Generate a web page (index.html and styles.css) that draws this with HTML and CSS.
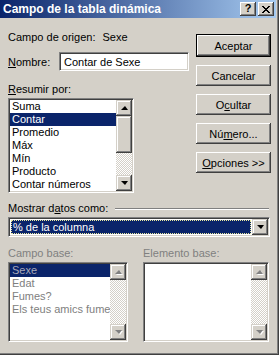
FILE: index.html
```html
<!DOCTYPE html>
<html lang="es">
<head>
  <meta charset="UTF-8">
  <title>Campo de la tabla dinámica</title>
  <link rel="stylesheet" href="styles.css">
</head>
<body>
  <div class="window">
    <!-- Barra de título -->
    <div class="titlebar">
      <span class="title">Campo de la tabla dinámica</span>
      <div class="title-btns">
        <span class="tbtn help">?</span>
        <span class="tbtn close">
          <svg width="8" height="7" viewBox="0 0 8 7" shape-rendering="crispEdges">
            <path d="M0 0h2v1H0zM6 0h2v1H6zM1 1h2v1H1zM5 1h2v1H5zM2 2h4v1H2zM3 3h2v1H3zM2 4h4v1H2zM1 5h2v1H1zM5 5h2v1H5zM0 6h2v1H0zM6 6h2v1H6z" fill="#000"/>
          </svg>
        </span>
      </div>
    </div>

    <div class="content">
      <div class="top">
        <div class="left">
          <div class="origin">
            <span>Campo de origen:</span>
            <span class="origin-val">Sexe</span>
          </div>
          <div class="name-row">
            <span class="name-lbl"><u>N</u>ombre:</span>
            <div class="field">Contar de Sexe</div>
          </div>
          <div class="lbl"><u>R</u>esumir por:</div>
          <div class="listbox summary">
            <ul class="items">
              <li>Suma</li>
              <li class="sel">Contar</li>
              <li>Promedio</li>
              <li>Máx</li>
              <li>Mín</li>
              <li>Producto</li>
              <li>Contar números</li>
            </ul>
            <div class="scrollbar">
              <span class="sbtn"><i class="arr up"></i></span>
              <span class="thumb"></span>
              <span class="track"></span>
              <span class="sbtn"><i class="arr down"></i></span>
            </div>
          </div>
        </div>

        <div class="buttons">
          <button class="btn default">Aceptar</button>
          <button class="btn">Cancelar</button>
          <button class="btn">O<u>c</u>ultar</button>
          <button class="btn">Nú<u>m</u>ero...</button>
          <button class="btn"><u>O</u>pciones &gt;&gt;</button>
        </div>
      </div>

      <div class="sep-row">
        <span>Mostrar d<u>a</u>tos como:</span>
        <span class="sep-line"></span>
      </div>
      <div class="combo">
        <div class="combo-val"><span class="focus">% de la columna</span></div>
        <span class="sbtn"><i class="arr down"></i></span>
      </div>

      <div class="base">
        <div class="base-col">
          <div class="lbl disabled">Campo base:</div>
          <div class="listbox base-list w1">
            <ul class="items disabled">
              <li class="sel">Sexe</li>
              <li>Edat</li>
              <li>Fumes?</li>
              <li>Els teus amics fumen</li>
            </ul>
            <div class="scrollbar off">
              <span class="sbtn"><i class="arr up"></i></span>
              <span class="track"></span>
              <span class="sbtn"><i class="arr down"></i></span>
            </div>
          </div>
        </div>
        <div class="base-col">
          <div class="lbl disabled">Elemento base:</div>
          <div class="listbox base-list w2">
            <ul class="items disabled"></ul>
            <div class="scrollbar off">
              <span class="sbtn"><i class="arr up"></i></span>
              <span class="track"></span>
              <span class="sbtn"><i class="arr down"></i></span>
            </div>
          </div>
        </div>
      </div>
    </div>
  </div>
</body>
</html>
```

FILE: styles.css
```css
* { box-sizing: border-box; }
body {
  margin: 0;
  font-family: 'Liberation Sans', Arial, sans-serif;
  font-size: 11px;
  color: #000;
  background: #d4d0c8;
}
.window {
  width: 279px;
  height: 355px;
  background: #d4d0c8;
  box-shadow: inset -1px -1px #404040, inset -2px -2px #808080;
  display: flex;
  flex-direction: column;
}
/* Barra de título */
.titlebar {
  height: 18px;
  margin-right: 3px;
  background: linear-gradient(90deg, #0a246a, #a6caf0);
  display: flex;
  align-items: center;
  justify-content: space-between;
  padding: 0 2px 0 3px;
}
.title {
  color: #fff;
  font-weight: 700;
  font-size: 12px;
}
.title-btns {
  display: flex;
  gap: 2px;
}
.tbtn {
  width: 16px;
  height: 14px;
  background: #d4d0c8;
  box-shadow: inset -1px -1px #404040, inset 1px 1px #fff, inset -2px -2px #808080;
  display: flex;
  align-items: center;
  justify-content: center;
  font-weight: 700;
  font-size: 11px;
  line-height: 1;
}
.help { padding-bottom: 1px; }
/* Contenido */
.content {
  padding: 0 0 0 8px;
}
.top {
  display: flex;
  gap: 7px;
}
.left {
  width: 181px;
}
.origin {
  margin-top: 13px;
  line-height: 13px;
  display: flex;
  gap: 7px;
}
.name-row {
  margin-top: 8px;
  display: flex;
  align-items: center;
  gap: 12px;
}
.name-lbl { width: 39px; }
.field {
  width: 130px;
  height: 19px;
  background: #fff;
  border: 1px solid;
  border-color: #808080 #fff #fff #808080;
  box-shadow: inset 1px 1px #404040, inset -1px -1px #d4d0c8;
  padding: 2px 0 0 4px;
  line-height: 14px;
}
.lbl {
  line-height: 13px;
  margin-top: 12px;
}
.lbl.disabled {
  color: #808080;
  margin-top: 0;
}
/* Listas */
.listbox {
  display: flex;
  background: #fff;
  border: 1px solid;
  border-color: #808080 #fff #fff #808080;
  box-shadow: inset 1px 1px #404040, inset -1px -1px #d4d0c8;
  padding: 1px;
  margin-top: 2px;
}
.summary {
  width: 126px;
  height: 95px;
}
.items {
  list-style: none;
  margin: 0;
  padding: 0;
  flex: 1;
  min-width: 0;
  overflow: hidden;
}
.items li {
  height: 13px;
  line-height: 13px;
  padding-left: 2px;
  white-space: nowrap;
}
.items li.sel {
  background: #0a246a;
  color: #fff;
}
.items.disabled li { color: #808080; }
.items.disabled li.sel { color: #a8a8b8; }
.scrollbar {
  width: 16px;
  flex: none;
  display: flex;
  flex-direction: column;
}
.sbtn {
  width: 16px;
  height: 16px;
  flex: none;
  background: #d4d0c8;
  box-shadow: inset -1px -1px #404040, inset 1px 1px #d4d0c8, inset -2px -2px #808080, inset 2px 2px #fff;
  display: flex;
  align-items: center;
  justify-content: center;
}
.thumb {
  height: 37px;
  flex: none;
  background: #d4d0c8;
  box-shadow: inset -1px -1px #404040, inset 1px 1px #d4d0c8, inset -2px -2px #808080, inset 2px 2px #fff;
}
.track {
  flex: 1;
  background: repeating-conic-gradient(#fff 0 25%, #d4d0c8 0 50%) 0 0 / 2px 2px;
}
.arr {
  width: 0;
  height: 0;
  border-left: 4px solid transparent;
  border-right: 3px solid transparent;
}
.arr.up { border-bottom: 4px solid #000; margin-top: -1px; }
.arr.down { border-top: 4px solid #000; }
.off .arr.up { border-bottom-color: #808080; filter: drop-shadow(1px 1px 0 #fff); }
.off .arr.down { border-top-color: #808080; filter: drop-shadow(1px 1px 0 #fff); }
/* Botones */
.buttons {
  margin-top: 16px;
  display: flex;
  flex-direction: column;
  gap: 8px;
}
.btn {
  width: 75px;
  height: 21px;
  font-family: inherit;
  font-size: 11px;
  color: #000;
  background: #d4d0c8;
  border: none;
  padding: 0;
  box-shadow: inset -1px -1px #404040, inset 1px 1px #fff, inset -2px -2px #808080;
}
.btn.default {
  height: 23px;
  border: 1px solid #000;
}
/* Mostrar datos como */
.sep-row {
  margin-top: 9px;
  display: flex;
  align-items: center;
  gap: 7px;
  line-height: 13px;
  padding-right: 10px;
}
.sep-line {
  flex: 1;
  height: 2px;
  border-top: 1px solid #808080;
  border-bottom: 1px solid #fff;
}
.combo {
  width: 262px;
  height: 20px;
  margin-top: 2px;
  display: flex;
  background: #fff;
  border: 1px solid;
  border-color: #808080 #fff #fff #808080;
  box-shadow: inset 1px 1px #404040, inset -1px -1px #d4d0c8;
  padding: 1px;
}
.combo-val {
  flex: 1;
  padding: 1px;
}
.focus {
  display: block;
  height: 14px;
  background: #0a246a;
  color: #fff;
  line-height: 12px;
  padding-left: 1px;
  border: 1px dotted #e8e8a0;
}
.combo .sbtn { height: 16px; }
/* Campo base / Elemento base */
.base {
  margin-top: 10px;
  display: flex;
  gap: 15px;
}
.base-list {
  height: 80px;
}
.w1 { width: 120px; }
.w2 { width: 126px; }
```
